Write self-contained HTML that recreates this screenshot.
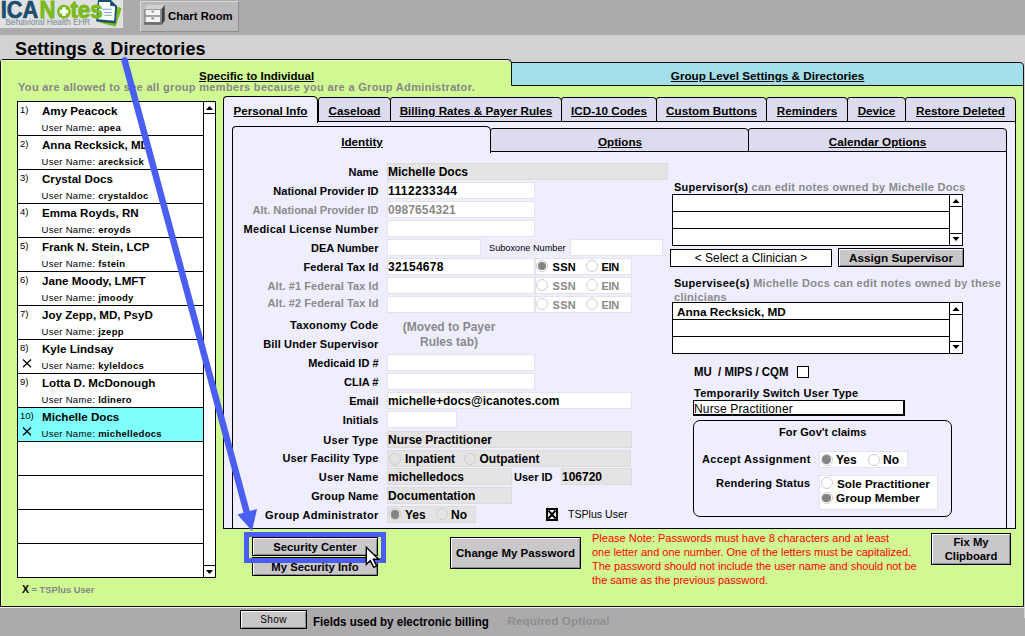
<!DOCTYPE html>
<html><head><meta charset="utf-8">
<style>
*{margin:0;padding:0;box-sizing:border-box}
html,body{width:1025px;height:636px;overflow:hidden;background:#d2d2d2;font-family:"Liberation Sans",sans-serif;color:#000}
.a{position:absolute}
.t{position:absolute;white-space:nowrap;line-height:1}
.u{text-decoration:underline}
</style></head><body>
<div class="a" style="left:0px;top:0px;width:1025px;height:35px;background:#acaaac"></div>
<div class="a" style="left:0px;top:0px;width:123px;height:28px;background:#e1e1e1"></div>
<svg class="a" style="left:0;top:0" width="123" height="28">
<polygon points="99.5,22.6 115.6,26.7 121.7,8.3 117,6.6" fill="#7aba1f"/>
<polygon points="97.9,0 110.9,0 117,6.1 115.6,23.6 96.2,21.5" fill="#1a4e6e"/>
<polygon points="99.1,2.1 110.2,2.1 110.2,5.7 115.1,6.6 114.2,20.8 98.1,19.3" fill="#fff"/>
<path d="M102.4 9.2 H111.8 M104.3 12.5 H111.8 M104.3 15.3 H111.8" stroke="#7da3cc" stroke-width="1.1"/>
<text x="0.8" y="17.5" font-family="Liberation Sans" font-weight="bold" font-size="23" fill="#1a4e6e" stroke="#1a4e6e" stroke-width="0.7" textLength="37.6" lengthAdjust="spacingAndGlyphs">ICA</text>
<text x="39.6" y="17.5" font-family="Liberation Sans" font-weight="bold" font-size="23" fill="#7aba1f" stroke="#7aba1f" stroke-width="0.9" textLength="16" lengthAdjust="spacingAndGlyphs">N</text>
<circle cx="63.9" cy="11.6" r="6.9" fill="#7aba1f"/>
<rect x="62.1" y="7.3" width="3.6" height="8.6" fill="#fff"/><rect x="59.6" y="9.8" width="8.6" height="3.6" fill="#fff"/>
<text x="70.4" y="17.6" font-family="Liberation Sans" font-weight="bold" font-size="24.5" fill="#7aba1f" stroke="#7aba1f" stroke-width="1" textLength="32.2" lengthAdjust="spacingAndGlyphs">tes</text>
<text x="5.6" y="24.8" font-family="Liberation Sans" font-size="8.6" fill="#8494a0" stroke="#8494a0" stroke-width="0.15" textLength="84.7" lengthAdjust="spacingAndGlyphs">Behavioral Health EHR</text>
</svg>
<div class="a" style="left:140px;top:1px;width:99px;height:31px;background:#bbb9bc;border:1px solid #8e8d8f;border-top-color:#d8d8d8;border-left-color:#d8d8d8"></div>
<div class="t" style="top:10.63px;font-size:11.3px;font-weight:bold;left:168px;">Chart Room</div>
<svg class="a" style="left:140px;top:0" width="30" height="32">
<polygon points="4.2,9 21.6,9 24.7,5.1 7,5.1" fill="#d2d2d2"/>
<polygon points="21.6,9 24.7,5.1 24.7,20.5 21.6,24.7" fill="#3c3c3c"/>
<rect x="4.2" y="9" width="17.4" height="15.7" fill="#8c8c8c"/>
<rect x="5.7" y="9.9" width="14.3" height="5.3" fill="#f4f4f4"/>
<rect x="5.7" y="16.8" width="14.3" height="5.2" fill="#f4f4f4"/>
<ellipse cx="12.8" cy="11.6" rx="1.6" ry="0.9" fill="#888"/>
<ellipse cx="12.8" cy="18.5" rx="1.6" ry="0.9" fill="#888"/>
<rect x="4.2" y="22.3" width="17.4" height="2.4" fill="#6a6a6a"/>
</svg>
<div class="t" style="top:40.26px;font-size:18px;font-weight:bold;letter-spacing:0.12px;left:15px;">Settings &amp; Directories</div>
<div class="a" style="left:0px;top:608px;width:1025px;height:28px;background:#acaaac"></div>
<div class="a" style="left:0px;top:607px;width:1025px;height:1px;background:#eeeeee"></div>
<div class="a" style="left:0px;top:59px;width:1024px;height:548px;background:#d1f993;border:1px solid #111;border-radius:3px 4px 0 0"></div>
<div class="a" style="left:1px;top:60px;width:1022px;height:546px;border-top:1px solid #e6ffc8;border-left:1px solid #e6ffc8"></div>
<div class="a" style="left:508px;top:58px;width:517px;height:4px;background:#d2d2d2"></div>
<div class="a" style="left:1017px;top:58px;width:8px;height:9px;background:#d2d2d2"></div>
<div class="a" style="left:1024px;top:58px;width:1px;height:560px;background:#d2d2d2"></div>
<div class="a" style="left:511px;top:62px;width:513px;height:24px;background:#a3dfe8;border:1px solid #111;border-radius:0 4px 0 0"></div>
<svg class="a" style="left:500px;top:55px" width="16" height="10"><path d="M0 4.5 H8 Q11.5 4.5 11.5 8 V10" fill="none" stroke="#111" stroke-width="1"/></svg>
<div class="t" style="top:70.10px;font-size:11.7px;font-weight:bold;left:467.6px;width:600px;text-align:center;"><span class="u">Group Level Settings &amp; Directories</span></div>
<div class="t" style="top:70.67px;font-size:11.5px;font-weight:bold;left:-43.39999999999998px;width:600px;text-align:center;"><span class="u">Specific to Individual</span></div>
<div class="t" style="top:82.09px;font-size:11px;font-weight:bold;color:#868686;letter-spacing:0.33px;left:18px;">You are allowed to see all group members because you are a Group Administrator.</div>
<div class="a" style="left:17px;top:101px;width:199px;height:477px;background:#fff;border:1px solid #000"></div>
<div class="a" style="left:203px;top:101px;width:13px;height:477px;border-left:1px solid #000"></div>
<div class="t" style="top:105.26px;font-size:9.5px;left:20px;">1)</div>
<div class="t" style="top:104.78px;font-size:11.6px;font-weight:bold;left:42px;">Amy Peacock</div>
<div class="t" style="top:123.06px;font-size:9.5px;letter-spacing:0.3px;left:41.5px;">User Name: <b>apea</b></div>
<div class="a" style="left:17px;top:135px;width:187px;height:1px;background:#000"></div>
<div class="t" style="top:139.26px;font-size:9.5px;left:20px;">2)</div>
<div class="t" style="top:138.78px;font-size:11.6px;font-weight:bold;left:42px;">Anna Recksick, MD</div>
<div class="t" style="top:157.06px;font-size:9.5px;letter-spacing:0.3px;left:41.5px;">User Name: <b>arecksick</b></div>
<div class="a" style="left:17px;top:169px;width:187px;height:1px;background:#000"></div>
<div class="t" style="top:173.26px;font-size:9.5px;left:20px;">3)</div>
<div class="t" style="top:172.78px;font-size:11.6px;font-weight:bold;left:42px;">Crystal Docs</div>
<div class="t" style="top:191.06px;font-size:9.5px;letter-spacing:0.3px;left:41.5px;">User Name: <b>crystaldoc</b></div>
<div class="a" style="left:17px;top:203px;width:187px;height:1px;background:#000"></div>
<div class="t" style="top:207.26px;font-size:9.5px;left:20px;">4)</div>
<div class="t" style="top:206.78px;font-size:11.6px;font-weight:bold;left:42px;">Emma Royds, RN</div>
<div class="t" style="top:225.06px;font-size:9.5px;letter-spacing:0.3px;left:41.5px;">User Name: <b>eroyds</b></div>
<div class="a" style="left:17px;top:237px;width:187px;height:1px;background:#000"></div>
<div class="t" style="top:241.26px;font-size:9.5px;left:20px;">5)</div>
<div class="t" style="top:240.78px;font-size:11.6px;font-weight:bold;left:42px;">Frank N. Stein, LCP</div>
<div class="t" style="top:259.06px;font-size:9.5px;letter-spacing:0.3px;left:41.5px;">User Name: <b>fstein</b></div>
<div class="a" style="left:17px;top:271px;width:187px;height:1px;background:#000"></div>
<div class="t" style="top:275.26px;font-size:9.5px;left:20px;">6)</div>
<div class="t" style="top:274.78px;font-size:11.6px;font-weight:bold;left:42px;">Jane Moody, LMFT</div>
<div class="t" style="top:293.06px;font-size:9.5px;letter-spacing:0.3px;left:41.5px;">User Name: <b>jmoody</b></div>
<div class="a" style="left:17px;top:305px;width:187px;height:1px;background:#000"></div>
<div class="t" style="top:309.26px;font-size:9.5px;left:20px;">7)</div>
<div class="t" style="top:308.78px;font-size:11.6px;font-weight:bold;left:42px;">Joy Zepp, MD, PsyD</div>
<div class="t" style="top:327.06px;font-size:9.5px;letter-spacing:0.3px;left:41.5px;">User Name: <b>jzepp</b></div>
<div class="a" style="left:17px;top:339px;width:187px;height:1px;background:#000"></div>
<div class="t" style="top:343.26px;font-size:9.5px;left:20px;">8)</div>
<div class="t" style="top:342.78px;font-size:11.6px;font-weight:bold;left:42px;">Kyle Lindsay</div>
<div class="t" style="top:361.06px;font-size:9.5px;letter-spacing:0.3px;left:41.5px;">User Name: <b>kyleldocs</b></div>
<svg class="a" style="left:22px;top:359px" width="10" height="9"><path d="M1 0.5 L9 8.3 M9 0.5 L1 8.3" stroke="#000" stroke-width="1.2"/></svg>
<div class="a" style="left:17px;top:373px;width:187px;height:1px;background:#000"></div>
<div class="t" style="top:377.26px;font-size:9.5px;left:20px;">9)</div>
<div class="t" style="top:376.78px;font-size:11.6px;font-weight:bold;left:42px;">Lotta D. McDonough</div>
<div class="t" style="top:395.06px;font-size:9.5px;letter-spacing:0.3px;left:41.5px;">User Name: <b>ldinero</b></div>
<div class="a" style="left:18px;top:408px;width:185px;height:33px;background:#80ffff"></div>
<div class="a" style="left:17px;top:407px;width:187px;height:1px;background:#000"></div>
<div class="t" style="top:411.26px;font-size:9.5px;left:20px;">10)</div>
<div class="t" style="top:410.78px;font-size:11.6px;font-weight:bold;left:42px;">Michelle Docs</div>
<div class="t" style="top:429.06px;font-size:9.5px;letter-spacing:0.3px;left:41.5px;">User Name: <b>michelledocs</b></div>
<svg class="a" style="left:22px;top:427px" width="10" height="9"><path d="M1 0.5 L9 8.3 M9 0.5 L1 8.3" stroke="#000" stroke-width="1.2"/></svg>
<div class="a" style="left:17px;top:441px;width:187px;height:1px;background:#000"></div>
<div class="a" style="left:17px;top:475px;width:187px;height:1px;background:#000"></div>
<div class="a" style="left:17px;top:509px;width:187px;height:1px;background:#000"></div>
<div class="a" style="left:17px;top:543px;width:187px;height:1px;background:#000"></div>
<div class="a" style="left:204px;top:102px;width:11px;height:12px;border-bottom:1px solid #000"></div>
<svg class="a" style="left:204px;top:102px" width="11" height="12"><path d="M2 8 L9 8 L5.5 4 Z" fill="#000"/></svg>
<div class="a" style="left:204px;top:565px;width:11px;height:12px;border-top:1px solid #000"></div>
<svg class="a" style="left:204px;top:566px" width="11" height="12"><path d="M2 4 L9 4 L5.5 8 Z" fill="#000"/></svg>
<div class="t" style="top:584.13px;font-size:9.3px;font-weight:bold;color:#858585;left:22px;"><span style="color:#000;font-size:10.5px">X</span> = TSPlus User</div>
<div class="a" style="left:223px;top:121px;width:793px;height:408px;background:#efeeff;border:1px solid #000"></div>
<div class="a" style="left:223px;top:96px;width:95px;height:27px;background:#efeeff;border:1px solid #000;border-bottom:none;border-radius:4px 5px 0 0"></div>
<div class="t" style="top:105.00px;font-size:11.7px;font-weight:bold;left:-29.5px;width:600px;text-align:center;"><span class="u">Personal Info</span></div>
<div class="a" style="left:318px;top:97px;width:73px;height:25px;background:#dddbee;border:1px solid #000;border-radius:3px 4px 0 0"></div>
<div class="t" style="top:105.00px;font-size:11.7px;font-weight:bold;left:54.5px;width:600px;text-align:center;"><span class="u">Caseload</span></div>
<div class="a" style="left:390px;top:97px;width:172px;height:25px;background:#dddbee;border:1px solid #000;border-radius:3px 4px 0 0"></div>
<div class="t" style="top:105.00px;font-size:11.7px;font-weight:bold;left:176.0px;width:600px;text-align:center;"><span class="u">Billing Rates &amp; Payer Rules</span></div>
<div class="a" style="left:561px;top:97px;width:96px;height:25px;background:#dddbee;border:1px solid #000;border-radius:3px 4px 0 0"></div>
<div class="t" style="top:105.00px;font-size:11.7px;font-weight:bold;left:309.0px;width:600px;text-align:center;"><span class="u">ICD-10 Codes</span></div>
<div class="a" style="left:656px;top:97px;width:111px;height:25px;background:#dddbee;border:1px solid #000;border-radius:3px 4px 0 0"></div>
<div class="t" style="top:105.00px;font-size:11.7px;font-weight:bold;left:411.5px;width:600px;text-align:center;"><span class="u">Custom Buttons</span></div>
<div class="a" style="left:766px;top:97px;width:82px;height:25px;background:#dddbee;border:1px solid #000;border-radius:3px 4px 0 0"></div>
<div class="t" style="top:105.00px;font-size:11.7px;font-weight:bold;left:507.0px;width:600px;text-align:center;"><span class="u">Reminders</span></div>
<div class="a" style="left:847px;top:97px;width:59px;height:25px;background:#dddbee;border:1px solid #000;border-radius:3px 4px 0 0"></div>
<div class="t" style="top:105.00px;font-size:11.7px;font-weight:bold;left:576.5px;width:600px;text-align:center;"><span class="u">Device</span></div>
<div class="a" style="left:905px;top:97px;width:111px;height:25px;background:#dddbee;border:1px solid #000;border-radius:3px 4px 0 0"></div>
<div class="t" style="top:105.00px;font-size:11.7px;font-weight:bold;left:660.5px;width:600px;text-align:center;"><span class="u">Restore Deleted</span></div>
<div class="a" style="left:232px;top:151px;width:775px;height:378px;background:#efeeff;border:1px solid #000;border-right:1px solid #000"></div>
<div class="a" style="left:232px;top:126px;width:259px;height:27px;background:#efeeff;border:1px solid #000;border-bottom:none;border-radius:4px 5px 0 0"></div>
<div class="a" style="left:490px;top:128px;width:259px;height:24px;background:#dddbee;border:1px solid #000;border-radius:3px 4px 0 0"></div>
<div class="a" style="left:748px;top:128px;width:259px;height:24px;background:#dddbee;border:1px solid #000;border-radius:3px 4px 0 0"></div>
<div class="t" style="top:136.10px;font-size:11.7px;font-weight:bold;left:62px;width:600px;text-align:center;"><span class="u">Identity</span></div>
<div class="t" style="top:135.80px;font-size:11.7px;font-weight:bold;left:320px;width:600px;text-align:center;"><span class="u">Options</span></div>
<div class="t" style="top:135.90px;font-size:11.7px;font-weight:bold;left:577.5px;width:600px;text-align:center;"><span class="u">Calendar Options</span></div>
<div class="a" style="left:387px;top:163px;width:281px;height:17px;background:#e6e3e4;border:1px solid #dcdada"></div>
<div class="t" style="top:166.79px;font-size:11px;font-weight:bold;right:646.5px;">Name</div>
<div class="t" style="top:166.14px;font-size:12px;font-weight:bold;left:388px;">Michelle Docs</div>
<div class="a" style="left:387px;top:182px;width:148px;height:17px;background:#fff;border:1px solid #e3e3ec"></div>
<div class="t" style="top:185.79px;font-size:11px;font-weight:bold;right:646.5px;">National Provider ID</div>
<div class="t" style="top:185.14px;font-size:12px;font-weight:bold;letter-spacing:0.4px;left:388px;">1112233344</div>
<div class="a" style="left:387px;top:201px;width:148px;height:17px;background:#fff;border:1px solid #e3e3ec"></div>
<div class="t" style="top:204.79px;font-size:11px;font-weight:bold;color:#8a8a8a;right:646.5px;">Alt. National Provider ID</div>
<div class="t" style="top:204.14px;font-size:12px;font-weight:bold;color:#8a8a8a;letter-spacing:0.1px;left:388px;">0987654321</div>
<div class="a" style="left:387px;top:220px;width:148px;height:17px;background:#fff;border:1px solid #e3e3ec"></div>
<div class="t" style="top:223.79px;font-size:11px;font-weight:bold;letter-spacing:0.27px;right:646.5px;">Medical License Number</div>
<div class="a" style="left:387px;top:239px;width:94px;height:17px;background:#fff;border:1px solid #e3e3ec"></div>
<div class="t" style="top:242.79px;font-size:11px;font-weight:bold;right:646.5px;">DEA Number</div>
<div class="a" style="left:569.5px;top:239px;width:93.5px;height:17px;background:#fff;border:1px solid #e3e3ec"></div>
<div class="t" style="top:243.71px;font-size:9.2px;left:489px;">Suboxone Number</div>
<div class="a" style="left:387px;top:258px;width:148px;height:17px;background:#fff;border:1px solid #e3e3ec"></div>
<div class="a" style="left:535px;top:258px;width:97px;height:17px;background:#fff;border:1px solid #e3e3ec"></div>
<div class="t" style="top:261.79px;font-size:11px;font-weight:bold;letter-spacing:0.14px;right:646.5px;">Federal Tax Id</div>
<div class="a" style="left:387px;top:277px;width:148px;height:17px;background:#fff;border:1px solid #e3e3ec"></div>
<div class="a" style="left:535px;top:277px;width:97px;height:17px;background:#fff;border:1px solid #e3e3ec"></div>
<div class="t" style="top:280.79px;font-size:11px;font-weight:bold;color:#8a8a8a;letter-spacing:0.08px;right:646.5px;">Alt. #1 Federal Tax Id</div>
<div class="a" style="left:387px;top:296px;width:148px;height:17px;background:#fff;border:1px solid #e3e3ec"></div>
<div class="a" style="left:535px;top:296px;width:97px;height:17px;background:#fff;border:1px solid #e3e3ec"></div>
<div class="t" style="top:298.29px;font-size:11px;font-weight:bold;color:#8a8a8a;letter-spacing:0.08px;right:646.5px;">Alt. #2 Federal Tax Id</div>
<div class="t" style="top:261.14px;font-size:12px;font-weight:bold;letter-spacing:0.3px;left:388px;">32154678</div>
<div class="a" style="left:536px;top:260px;width:12px;height:12px;border:1px solid #cdcdcd;border-radius:50%"></div>
<div class="a" style="left:537.7px;top:261.7px;width:8.6px;height:8.6px;background:#838383;border-radius:50%"></div>
<div class="t" style="top:261.59px;font-size:11px;font-weight:bold;letter-spacing:0.3px;left:552.5px;">SSN</div>
<div class="a" style="left:586px;top:260px;width:12px;height:12px;border:1px solid #cdcdcd;border-radius:50%"></div>
<div class="t" style="top:261.59px;font-size:11px;font-weight:bold;letter-spacing:-0.3px;left:601.4px;">EIN</div>
<div class="a" style="left:536px;top:279px;width:12px;height:12px;border:1px solid #cdcdcd;border-radius:50%"></div>
<div class="t" style="top:280.59px;font-size:11px;font-weight:bold;color:#8a8a8a;letter-spacing:0.3px;left:552.5px;">SSN</div>
<div class="a" style="left:586px;top:279px;width:12px;height:12px;border:1px solid #cdcdcd;border-radius:50%"></div>
<div class="t" style="top:280.59px;font-size:11px;font-weight:bold;color:#8a8a8a;letter-spacing:-0.3px;left:601.4px;">EIN</div>
<div class="a" style="left:536px;top:298px;width:12px;height:12px;border:1px solid #cdcdcd;border-radius:50%"></div>
<div class="t" style="top:299.59px;font-size:11px;font-weight:bold;color:#8a8a8a;letter-spacing:0.3px;left:552.5px;">SSN</div>
<div class="a" style="left:586px;top:298px;width:12px;height:12px;border:1px solid #cdcdcd;border-radius:50%"></div>
<div class="t" style="top:299.59px;font-size:11px;font-weight:bold;color:#8a8a8a;letter-spacing:-0.3px;left:601.4px;">EIN</div>
<div class="t" style="top:320.29px;font-size:11px;font-weight:bold;letter-spacing:0.28px;right:646.5px;">Taxonomy Code</div>
<div class="t" style="top:339.29px;font-size:11px;font-weight:bold;letter-spacing:0.13px;right:646.5px;">Bill Under Supervisor</div>
<div class="t" style="top:320.84px;font-size:12px;font-weight:bold;color:#8a8a8a;left:149px;width:600px;text-align:center;">(Moved to Payer</div>
<div class="t" style="top:335.84px;font-size:12px;font-weight:bold;color:#8a8a8a;left:149px;width:600px;text-align:center;">Rules tab)</div>
<div class="a" style="left:387px;top:354px;width:148px;height:17px;background:#fff;border:1px solid #e3e3ec"></div>
<div class="t" style="top:357.79px;font-size:11px;font-weight:bold;right:646.5px;">Medicaid ID #</div>
<div class="a" style="left:387px;top:373px;width:148px;height:17px;background:#fff;border:1px solid #e3e3ec"></div>
<div class="t" style="top:376.79px;font-size:11px;font-weight:bold;right:646.5px;">CLIA #</div>
<div class="a" style="left:387px;top:392px;width:245px;height:17px;background:#fff;border:1px solid #e3e3ec"></div>
<div class="t" style="top:395.79px;font-size:11px;font-weight:bold;right:646.5px;">Email</div>
<div class="t" style="top:395.14px;font-size:12px;font-weight:bold;left:388px;">michelle+docs@icanotes.com</div>
<div class="a" style="left:387px;top:411px;width:70px;height:17px;background:#fff;border:1px solid #e3e3ec"></div>
<div class="t" style="top:414.79px;font-size:11px;font-weight:bold;letter-spacing:0.1px;right:646.5px;">Initials</div>
<div class="a" style="left:387px;top:431px;width:245px;height:17px;background:#e6e3e4;border:1px solid #dcdada"></div>
<div class="t" style="top:434.79px;font-size:11px;font-weight:bold;letter-spacing:0.33px;right:646.5px;">User Type</div>
<div class="t" style="top:434.14px;font-size:12px;font-weight:bold;left:388px;">Nurse Practitioner</div>
<div class="a" style="left:387px;top:450px;width:244px;height:17px;background:#e6e3e4;border:1px solid #dcdada"></div>
<div class="t" style="top:452.79px;font-size:11px;font-weight:bold;letter-spacing:0.15px;right:646.5px;">User Facility Type</div>
<div class="a" style="left:389px;top:452.5px;width:12px;height:12px;border:1px solid #cdcdcd;border-radius:50%"></div>
<div class="t" style="top:453.44px;font-size:12px;font-weight:bold;left:405px;">Inpatient</div>
<div class="a" style="left:464px;top:452.5px;width:12px;height:12px;border:1px solid #cdcdcd;border-radius:50%"></div>
<div class="t" style="top:453.44px;font-size:12px;font-weight:bold;left:479.5px;">Outpatient</div>
<div class="a" style="left:387px;top:468px;width:125px;height:17px;background:#e6e3e4;border:1px solid #dcdada"></div>
<div class="t" style="top:472.29px;font-size:11px;font-weight:bold;letter-spacing:0.24px;right:646.5px;">User Name</div>
<div class="t" style="top:471.14px;font-size:12px;font-weight:bold;left:388px;">michelledocs</div>
<div class="t" style="top:471.69px;font-size:11px;font-weight:bold;left:514px;">User ID</div>
<div class="a" style="left:561px;top:468px;width:71px;height:17px;background:#e6e3e4;border:1px solid #dcdada"></div>
<div class="t" style="top:471.14px;font-size:12px;font-weight:bold;left:562px;">106720</div>
<div class="a" style="left:387px;top:487px;width:125px;height:17px;background:#e6e3e4;border:1px solid #dcdada"></div>
<div class="t" style="top:491.29px;font-size:11px;font-weight:bold;letter-spacing:0.13px;right:646.5px;">Group Name</div>
<div class="t" style="top:490.14px;font-size:12px;font-weight:bold;left:388px;">Documentation</div>
<div class="a" style="left:387px;top:506px;width:89px;height:17px;background:#e6e3e4;border:1px solid #dcdada"></div>
<div class="t" style="top:509.79px;font-size:11px;font-weight:bold;letter-spacing:0.3px;right:646.5px;">Group Administrator</div>
<div class="a" style="left:389px;top:508.29999999999995px;width:12px;height:12px;border:1px solid #cdcdcd;border-radius:50%"></div>
<div class="a" style="left:390.7px;top:509.99999999999994px;width:8.6px;height:8.6px;background:#838383;border-radius:50%"></div>
<div class="t" style="top:509.14px;font-size:12px;font-weight:bold;left:405px;">Yes</div>
<div class="a" style="left:436px;top:508.29999999999995px;width:12px;height:12px;border:1px solid #cdcdcd;border-radius:50%"></div>
<div class="t" style="top:509.14px;font-size:12px;font-weight:bold;left:451px;">No</div>
<div class="a" style="left:546px;top:508px;width:12px;height:13px;background:#fff;border:2px solid #000"></div>
<svg class="a" style="left:546px;top:508px" width="12" height="13"><path d="M2.5 2.5 L9.5 10.5 M9.5 2.5 L2.5 10.5" stroke="#000" stroke-width="2"/></svg>
<div class="t" style="top:509.03px;font-size:10.6px;left:568px;">TSPlus User</div>
<div class="t" style="top:182.39px;font-size:11px;font-weight:bold;letter-spacing:0.26px;left:674px;">Supervisor(s) <span style="color:#8a8a8a">can edit notes owned by Michelle Docs</span></div>
<div class="a" style="left:672px;top:194px;width:291px;height:52px;background:#fff;border:1px solid #000"></div>
<div class="a" style="left:949px;top:194px;width:1px;height:51px;background:#000"></div>
<div class="a" style="left:672px;top:211px;width:277px;height:1px;background:#000"></div>
<div class="a" style="left:672px;top:228px;width:277px;height:1px;background:#000"></div>
<div class="a" style="left:950px;top:195px;width:12px;height:12px;border-bottom:1px solid #000"></div>
<svg class="a" style="left:950px;top:195px" width="12" height="12"><path d="M2.5 8 L9.5 8 L6 4 Z" fill="#000"/></svg>
<div class="a" style="left:950px;top:233px;width:12px;height:12px;border-top:1px solid #000"></div>
<svg class="a" style="left:950px;top:233px" width="12" height="12"><path d="M2.5 4 L9.5 4 L6 8 Z" fill="#000"/></svg>
<div class="a" style="left:670px;top:249px;width:162px;height:18px;background:#fff;border:1px solid #000"></div>
<div class="t" style="top:251.84px;font-size:12px;left:451px;width:600px;text-align:center;">&lt; Select a Clinician &gt;</div>
<div class="a" style="left:838px;top:248px;width:126px;height:19px;background:#c9c7ca;border:1px solid #000;box-shadow:inset 1px 1px 0 #fff,inset -1px -1px 0 #8a8a8a"></div>
<div class="t" style="top:252.51px;font-size:11.8px;font-weight:bold;left:601px;width:600px;text-align:center;">Assign Supervisor</div>
<div class="t" style="top:278.49px;font-size:11px;font-weight:bold;letter-spacing:0.28px;left:674px;">Supervisee(s) <span style="color:#8a8a8a">Michelle Docs can edit notes owned by these</span></div>
<div class="t" style="top:292.19px;font-size:11px;font-weight:bold;color:#8a8a8a;letter-spacing:0.28px;left:674px;">clinicians</div>
<div class="a" style="left:672px;top:302px;width:291px;height:52px;background:#fff;border:1px solid #000"></div>
<div class="a" style="left:949px;top:302px;width:1px;height:51px;background:#000"></div>
<div class="a" style="left:672px;top:319px;width:277px;height:1px;background:#000"></div>
<div class="a" style="left:672px;top:336px;width:277px;height:1px;background:#000"></div>
<div class="a" style="left:950px;top:303px;width:12px;height:12px;border-bottom:1px solid #000"></div>
<svg class="a" style="left:950px;top:303px" width="12" height="12"><path d="M2.5 8 L9.5 8 L6 4 Z" fill="#000"/></svg>
<div class="a" style="left:950px;top:341px;width:12px;height:12px;border-top:1px solid #000"></div>
<svg class="a" style="left:950px;top:341px" width="12" height="12"><path d="M2.5 4 L9.5 4 L6 8 Z" fill="#000"/></svg>
<div class="t" style="top:306.51px;font-size:11.8px;font-weight:bold;left:677px;">Anna Recksick, MD</div>
<div class="t" style="top:365.73px;font-size:12.6px;font-weight:bold;left:694px;"><span style="display:inline-block;transform:scaleX(0.906);transform-origin:0 0">MU &nbsp;/ MIPS / CQM</span></div>
<div class="a" style="left:797px;top:366px;width:12px;height:12px;background:#fff;border:1px solid #000"></div>
<div class="t" style="top:387.99px;font-size:11px;font-weight:bold;letter-spacing:0.3px;left:694px;">Temporarily Switch User Type</div>
<div class="a" style="left:693px;top:400.3px;width:212px;height:16px;background:#fff;border:1px solid #000;border-right-width:2px;border-bottom-width:2px"></div>
<div class="t" style="top:402.84px;font-size:12px;letter-spacing:0.16px;left:694px;">Nurse Practitioner</div>
<div class="a" style="left:693px;top:420px;width:259px;height:97px;border:1px solid #000;border-radius:7px"></div>
<div class="t" style="top:427.19px;font-size:11px;font-weight:bold;letter-spacing:0.1px;left:522.7px;width:600px;text-align:center;">For Gov't claims</div>
<div class="t" style="top:454.29px;font-size:11px;font-weight:bold;letter-spacing:0.38px;left:702px;">Accept Assignment</div>
<div class="a" style="left:819px;top:451px;width:89px;height:17px;background:#fff;border:1px solid #e3e3ec"></div>
<div class="a" style="left:820.5px;top:453.5px;width:12px;height:12px;border:1px solid #cdcdcd;border-radius:50%"></div>
<div class="a" style="left:822.2px;top:455.2px;width:8.6px;height:8.6px;background:#838383;border-radius:50%"></div>
<div class="t" style="top:454.34px;font-size:12px;font-weight:bold;left:836px;">Yes</div>
<div class="a" style="left:867.5px;top:453.5px;width:12px;height:12px;border:1px solid #cdcdcd;border-radius:50%"></div>
<div class="t" style="top:454.34px;font-size:12px;font-weight:bold;left:883px;">No</div>
<div class="t" style="top:478.09px;font-size:11px;font-weight:bold;letter-spacing:0.2px;left:716px;">Rendering Status</div>
<div class="a" style="left:819px;top:475px;width:119px;height:35px;background:#fff;border:1px solid #e3e3ec"></div>
<div class="a" style="left:820.5px;top:477px;width:12px;height:12px;border:1px solid #cdcdcd;border-radius:50%"></div>
<div class="t" style="top:477.60px;font-size:11.7px;font-weight:bold;left:837px;">Sole Practitioner</div>
<div class="a" style="left:820.5px;top:492px;width:12px;height:12px;border:1px solid #cdcdcd;border-radius:50%"></div>
<div class="a" style="left:822.2px;top:493.7px;width:8.6px;height:8.6px;background:#838383;border-radius:50%"></div>
<div class="t" style="top:493.01px;font-size:11.8px;font-weight:bold;left:836px;">Group Member</div>
<div class="a" style="left:252px;top:557px;width:126px;height:19px;background:#c9c7ca;border:1px solid #000;box-shadow:inset 1px 1px 0 #fff,inset -1px -1px 0 #8a8a8a"></div>
<div class="t" style="top:561.73px;font-size:11.3px;font-weight:bold;left:15px;width:600px;text-align:center;">My Security Info</div>
<div class="a" style="left:252px;top:537px;width:126px;height:19px;background:#c9c7ca;border:1px solid #000;box-shadow:inset 1px 1px 0 #fff,inset -1px -1px 0 #8a8a8a"></div>
<div class="t" style="top:541.73px;font-size:11.3px;font-weight:bold;left:15px;width:600px;text-align:center;">Security Center</div>
<div class="a" style="left:244px;top:532px;width:142px;height:31px;border:5px solid #4b5ef4"></div>
<div class="a" style="left:450px;top:537px;width:131px;height:32px;background:#c9c7ca;border:1px solid #000;box-shadow:inset 1px 1px 0 #fff,inset -1px -1px 0 #8a8a8a"></div>
<div class="t" style="top:548.07px;font-size:11.5px;font-weight:bold;left:215.5px;width:600px;text-align:center;">Change My Password</div>
<div class="a" style="left:931px;top:533px;width:80px;height:32px;background:#c9c7ca;border:1px solid #000;box-shadow:inset 1px 1px 0 #fff,inset -1px -1px 0 #8a8a8a"></div>
<div class="t" style="top:537.43px;font-size:11.3px;font-weight:bold;left:671px;width:600px;text-align:center;">Fix My</div>
<div class="t" style="top:551.43px;font-size:11.3px;font-weight:bold;left:671px;width:600px;text-align:center;">Clipboard</div>
<div class="t" style="top:533.49px;font-size:11px;color:#ff0000;left:592px;">Please Note: Passwords must have 8 characters and at least</div>
<div class="t" style="top:547.39px;font-size:11px;color:#ff0000;left:592px;">one letter and one number. One of the letters must be capitalized.</div>
<div class="t" style="top:561.29px;font-size:11px;color:#ff0000;left:592px;">The password should not include the user name and should not be</div>
<div class="t" style="top:575.19px;font-size:11px;color:#ff0000;left:592px;">the same as the previous password.</div>
<div class="a" style="left:240px;top:610px;width:67px;height:19px;background:#c9c7ca;border:1px solid #000;box-shadow:inset 1px 1px 0 #fff,inset -1px -1px 0 #8a8a8a"></div>
<div class="t" style="top:614.53px;font-size:10px;letter-spacing:0.4px;left:-26.5px;width:600px;text-align:center;">Show</div>
<div class="t" style="top:615.62px;font-size:12.5px;font-weight:bold;left:313px;"><span style="display:inline-block;transform:scaleX(0.927);transform-origin:0 0">Fields used by electronic billing</span></div>
<div class="t" style="top:615.18px;font-size:11.6px;font-weight:bold;color:#8d8d8d;letter-spacing:0.1px;left:507.5px;">Required&nbsp;Optional</div>
<svg class="a" style="left:0;top:0" width="1025" height="636"><line x1="124.6" y1="60.4" x2="246.7" y2="512" stroke="#4b5ef4" stroke-width="6.5" stroke-linecap="round"/><path d="M252 531 L237.5 514.5 L257 509 Z" fill="#4b5ef4"/></svg>
<svg class="a" style="left:365px;top:546px" width="17" height="24"><path d="M1.3 1.3 L1.3 18.3 L5.3 14.6 L8.8 21.3 L11.6 19.9 L8.3 13.3 L13.6 13.3 Z" fill="#fff" stroke="#000" stroke-width="1.4" stroke-linejoin="miter"/></svg>
</body></html>
